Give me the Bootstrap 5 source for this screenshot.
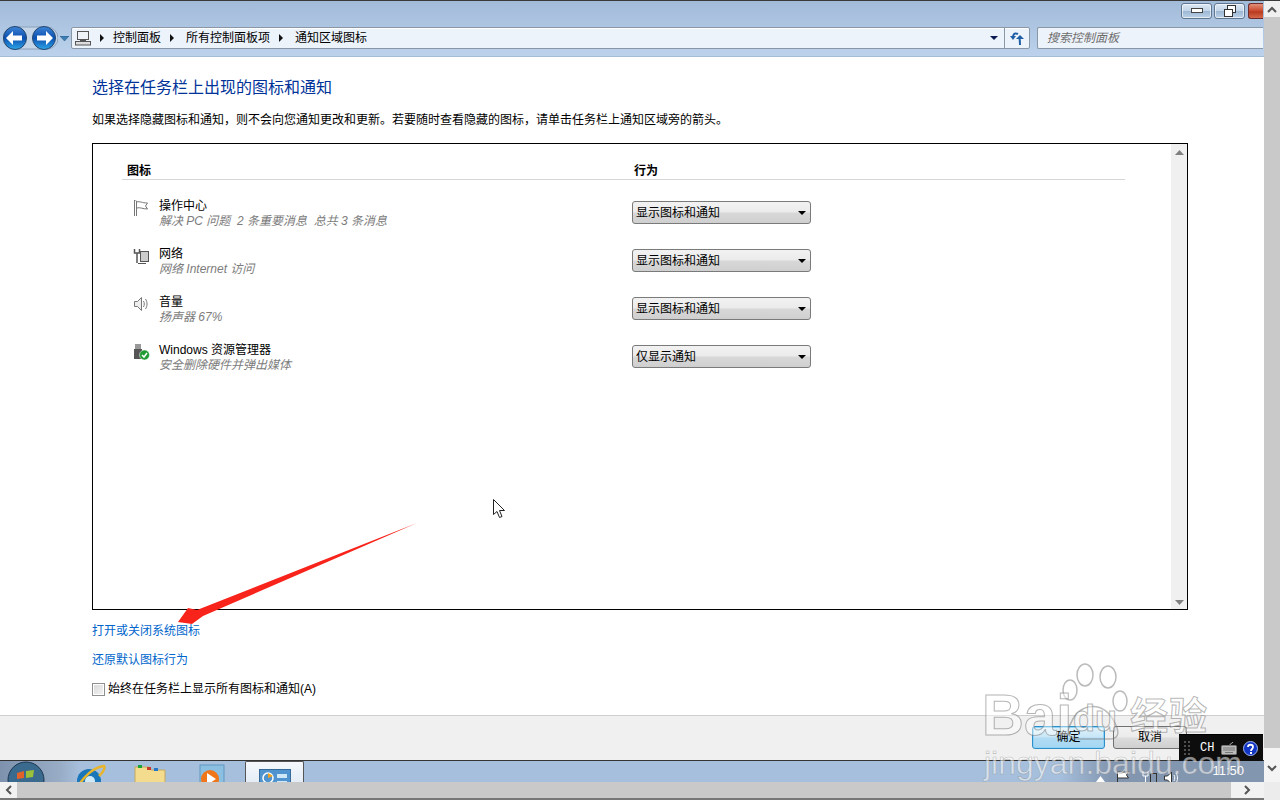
<!DOCTYPE html>
<html lang="zh-CN">
<head>
<meta charset="utf-8">
<title>通知区域图标</title>
<link href="https://cdn.jsdelivr.net/npm/bootstrap@5.3.0/dist/css/bootstrap.min.css" rel="stylesheet">
<style>
html,body{margin:0;height:800px;overflow:hidden;background:#fff}
body{font-family:"Liberation Sans","Noto Sans CJK SC",sans-serif;font-size:12px;color:#000;line-height:16px}
.screen{position:relative;width:1280px;height:800px;overflow:hidden;border-top:1px solid #3a3a3a}
.left-col{width:1264px}
.vbar{width:16px;background:#f0f0f0}
.vbtn{height:16px;font-size:0}
.vthumb{height:731px;background:#c9c9c9}
.vend{height:34px;background:#f4f4f4;padding-top:17px}
.vfoot{flex:1;background:#ececec}
.chrome{height:56px;background:linear-gradient(#a2bbd9,#bcd2ec);border-bottom:1px solid #a7bdd4;flex:none}
.winbar{height:25px;padding:2px 1px 0 0;gap:2px}
.winbtn{width:31px;height:16px;border:1px solid #5f7690;border-radius:3px;background:linear-gradient(#dce8f5 0,#c2d4e8 50%,#9db7d3 52%,#bcd2e8 100%);box-shadow:inset 0 0 0 1px rgba(255,255,255,.6)}
.winclose{width:15px;margin-left:1px;border-color:#6e2b2b;border-right:0;border-radius:3px 0 0 3px;background:linear-gradient(#e0907a,#c9482c 50%,#b83a20 55%,#d5674a);overflow:hidden;box-shadow:none}
.navrow{height:24px;padding:0 1px 0 3px}
.navdrop{width:12px}
.addr{height:22px;width:959px;margin-left:1px;background:#edf3fb;border:1px solid #8a97a6;border-radius:2px;box-shadow:inset 0 1px 0 #fff}
.crumb{color:#000;line-height:20px}
.crumb-first{margin-left:9px}
.crumb-next{margin-left:12px}
.crumbsep{width:0;height:0;margin-left:9px;border-left:4px solid #111;border-top:4px solid transparent;border-bottom:4px solid transparent}
.addr-ico{margin-left:3px;flex:none}
.addr-caret{margin-left:auto;margin-right:6px}
.addrend{width:25px;border-left:1px solid #8a97a6;height:20px}
.tri{width:0;height:0;border-top:4px solid #0b1a50;border-left:4px solid transparent;border-right:4px solid transparent}
.searchbox{width:226px;height:22px;margin-left:7px;background:#edf3fb;border:1px solid #8a97a6;border-right:0;border-radius:2px 0 0 2px;padding-left:9px;color:#6d6d6d;font-style:italic;line-height:20px}
.body-pane{flex:1;padding:21px 0 0 92px;background:#fff}
.page-head{font-size:16px;line-height:20px;color:#003399;margin:0 0 14px;font-weight:400}
.page-desc{margin:0 0 15px;line-height:16px}
.listbox{width:1096px;height:467px;border:1px solid #000;margin-bottom:13px}
.listmain{flex:1;padding:19px 46px 0 29px}
.listbar{width:16px;background:#f0f0f0;padding-top:6px}
.thead-row{width:1003px;border-bottom:1px solid #d5d5d5;height:17px;font-weight:700;line-height:16px;padding-left:5px}
.thead-a{width:507px}
.entry{height:48px;width:1003px}
.entries{padding-top:19px}
.entry-ico{width:26px;margin-left:11px;height:20px;padding-top:1px}
.entry-txt{width:473px}
.entry-name{line-height:15px}
.entry-sub{line-height:15px;color:#7c7c7c;font-style:italic;font-size:12px;white-space:pre}
.fakeselect{width:179px;height:23px;border:1px solid #7a7a7a;border-radius:3px;background:linear-gradient(#f2f2f2,#ebebeb 48%,#d8d8d8 52%,#cfcfcf);padding:1px 4px 0 3px;line-height:20px;margin-top:2px}
.blacktri{width:0;height:0;border-top:4px solid #000;border-left:4px solid transparent;border-right:4px solid transparent}
.plink{display:block;color:#0066cc;text-decoration:none;line-height:16px;margin-bottom:13px}
.chk-box{width:13px;height:13px;border:1px solid #8e8f8f;background:linear-gradient(135deg,#d8d8d8,#f4f4f4);box-shadow:inset 0 0 0 1px #fff;margin-right:3px}
.chk-row{margin-top:1px}
.foot-pane{height:45px;background:#f0f0f0;border-top:1px solid #cfcfcf;padding:10px 77px 0 0;flex:none;gap:8px}
.dlgbtn{width:74px;height:23px;border:1px solid #707070;border-radius:3px;background:linear-gradient(#f2f2f2,#ebebeb 48%,#dcdcdc 52%,#cfcfcf);text-align:center;line-height:21px;padding:0;font-size:12px}
.dlgbtn-def{width:73px;border-color:#2c8fc9;background:linear-gradient(#dff2fb,#c7e6f7 48%,#b1dcf4 52%,#a5d6f2);box-shadow:inset 0 0 0 1px #8fd4f5}
.taskbar{height:22px;flex:none;overflow:hidden;border-top:1px solid #333;background:linear-gradient(90deg,#7e92ae 0,#98acc6 60px,#a6bfdc 80px,#a6bfdc 1060px,#8396b0 1110px,#8396b0 100%);position:relative}
.task-ico{width:60px;padding-top:3px;text-align:center}
.task-orb{text-align:left;padding:0 0 0 6px}
.task-media{padding-left:5px}
.task-active{width:59px;height:30px;margin-left:5px;background:linear-gradient(#f5f8fc,#dce7f3);border:1px solid #555;border-bottom:0;border-radius:2px 2px 0 0;padding-top:7px;text-align:center}
.clock{color:#fff;font-size:13px;line-height:16px;margin:2px 20px 0 0}
.tray{margin-left:auto;padding-top:10px;margin-right:32px}
.tr-up{margin-top:5px}
.tr-flag{margin-left:11px}
.tr-net{margin-left:12px}
.tr-vol{margin-left:6px}
.hbar{height:16px;background:#c9c9c9;flex:none;width:1264px}
.hbtn{width:17px;background:#f2f2f2;font-size:0}
.hend{width:33px;margin-left:auto;background:#f2f2f2;font-size:0}
.bottomline{height:2px;background:#777;flex:none;width:1264px}
.over-layer{position:absolute;pointer-events:none}
.imebar{position:absolute;left:1179px;top:733px;width:84px;height:27px;background:#0d0d0d;border-top:1px solid #000;color:#fff;font-family:"Liberation Mono",monospace;font-size:12px;line-height:26px}
.ime-dots{margin-left:4px}
.imech{margin-left:7px;margin-right:7px;width:14px}
.ime-help{margin-left:5px}
.wm{position:absolute;color:rgba(255,255,255,.45);-webkit-text-stroke:1px rgba(120,120,120,.55);font-family:"Liberation Sans","Noto Sans CJK SC",sans-serif;white-space:nowrap;pointer-events:none}
.wm-bai{left:982px;top:684px;font-size:58px;line-height:60px;font-weight:700}
.wm-du{left:1073px;top:698px;font-size:36px;line-height:40px;font-weight:700}
.wm-jy{left:1130px;top:693px;font-size:38px;line-height:44px;font-weight:700;letter-spacing:1px}
.wm-url{left:984px;top:744px;font-size:32px;line-height:36px;color:rgba(255,255,255,.55);-webkit-text-stroke:.6px rgba(130,130,130,.5)}
</style>
</head>
<body>
<div class="screen d-flex">
  <div class="left-col d-flex flex-column">
    <div class="chrome">
      <div class="winbar d-flex justify-content-end">
        <div class="winbtn d-flex align-items-center justify-content-center"><svg width="12" height="6"><rect x=".5" y=".5" width="11" height="4" fill="#fff" stroke="#444"/></svg></div>
        <div class="winbtn d-flex align-items-center justify-content-center"><svg width="14" height="12" fill="#fff" stroke="#333"><rect x="4.5" y=".5" width="8" height="7"/><rect x="1.5" y="4.5" width="8" height="7"/></svg></div>
        <div class="winbtn winclose"></div>
      </div>
      <div class="navrow d-flex align-items-center">
        <svg width="55" height="24" viewBox="0 0 55 24">
          <defs><linearGradient id="g1" x1="0" y1="0" x2="0" y2="1"><stop offset="0" stop-color="#3f86d6"/><stop offset=".5" stop-color="#0b4fb0"/><stop offset="1" stop-color="#2fa5e8"/></linearGradient></defs>
          <rect x="0" y="1" width="55" height="22" rx="11" fill="#c5d5e8" stroke="#8aa0bb"/>
          <circle cx="12" cy="12" r="11.500" fill="url(#g1)" stroke="#24476e"/>
          <circle cx="41" cy="12" r="11.500" fill="url(#g1)" stroke="#24476e"/>
          <path d="M3 12l7-7v4.500h9v5h-9V19z" fill="#fff"/>
          <path d="M50 12l-7-7v4.500h-9v5h9V19z" fill="#fff"/>
        </svg>
        <div class="navdrop d-flex justify-content-center"><svg width="9" height="5"><path d="M0 0h9L4.500 5z" fill="#3b7fb5" stroke="#1f4f7e" stroke-width=".5"/></svg></div>
        <div class="addr d-flex align-items-center">
          <svg class="addr-ico" width="16" height="15" viewBox="0 0 16 15" fill="none" stroke="#555"><rect x="2.500" y=".5" width="11" height="8" fill="#eef3f9"/><rect x=".5" y="10.500" width="15" height="3.500" fill="#ddd"/><path d="M5 9.500h6"/></svg>
          <div class="crumbsep"></div><span class="crumb crumb-first">控制面板</span>
          <div class="crumbsep"></div><span class="crumb crumb-next">所有控制面板项</span>
          <div class="crumbsep"></div><span class="crumb crumb-next">通知区域图标</span>
          <div class="tri addr-caret"></div>
          <div class="addrend d-flex align-items-center justify-content-center">
            <svg width="15" height="15" viewBox="0 0 15 15" fill="none" stroke="#1f5fa8" stroke-width="2"><path d="M3 5c1-3 3-3 5-2"/><path d="M10 14c0-2 0-4-.500-7"/><path d="M0 5h6L3 9z" fill="#1f5fa8" stroke="none"/><path d="M6 8h8L10 4z" fill="#1f5fa8" stroke="none"/></svg>
          </div>
        </div>
        <div class="searchbox">搜索控制面板</div>
      </div>
    </div>

    <div class="body-pane">
      <h1 class="page-head">选择在任务栏上出现的图标和通知</h1>
      <p class="page-desc">如果选择隐藏图标和通知，则不会向您通知更改和更新。若要随时查看隐藏的图标，请单击任务栏上通知区域旁的箭头。</p>
      <div class="listbox d-flex">
        <div class="listmain">
          <div class="thead-row d-flex"><div class="thead-a">图标</div><div>行为</div></div>
          <div class="entries">
            <div class="entry d-flex">
              <div class="entry-ico"><svg width="17" height="17" viewBox="0 0 17 17" fill="#fff" stroke="#777"><path d="M1.500 0v16M3.500 1v15M1.500 0h2"/><path d="M3.500 2c4-1 5 1 11 1l-2 3 2 3c-5 0-7-2-11-1z"/></svg></div>
              <div class="entry-txt"><div class="entry-name">操作中心</div><div class="entry-sub">解决 PC 问题  2 条重要消息  总共 3 条消息</div></div>
              <div class="fakeselect d-flex align-items-center justify-content-between"><span>显示图标和通知</span><div class="blacktri"></div></div>
            </div>
            <div class="entry d-flex">
              <div class="entry-ico"><svg width="17" height="17" viewBox="0 0 17 17" fill="none" stroke="#555"><path d="M1.500 1v4h5V1M4 5v10" stroke-width="1.500"/><rect x="7.500" y="3.500" width="8" height="10" fill="#ccc"/><path d="M5 15.500h8"/></svg></div>
              <div class="entry-txt"><div class="entry-name">网络</div><div class="entry-sub">网络 Internet 访问</div></div>
              <div class="fakeselect d-flex align-items-center justify-content-between"><span>显示图标和通知</span><div class="blacktri"></div></div>
            </div>
            <div class="entry d-flex">
              <div class="entry-ico"><svg width="17" height="17" viewBox="0 0 17 17" fill="#eee" stroke="#777"><path d="M1.500 5.500h3l4-4v13l-4-4h-3z"/><path d="M10.500 5c1 2 1 4 0 6M12.500 3c2 3 2 7 0 10" fill="none"/></svg></div>
              <div class="entry-txt"><div class="entry-name">音量</div><div class="entry-sub">扬声器 67%</div></div>
              <div class="fakeselect d-flex align-items-center justify-content-between"><span>显示图标和通知</span><div class="blacktri"></div></div>
            </div>
            <div class="entry d-flex">
              <div class="entry-ico"><svg width="17" height="17" viewBox="0 0 17 17"><rect x="2" y="0" width="6" height="5" fill="#999"/><rect x="1" y="5" width="8" height="10" fill="#555"/><circle cx="11.500" cy="11" r="5" fill="#1f9b32" stroke="#fff" stroke-width=".5"/><path d="M9 11l2 2 3-4" fill="none" stroke="#fff" stroke-width="1.500"/></svg></div>
              <div class="entry-txt"><div class="entry-name">Windows 资源管理器</div><div class="entry-sub">安全删除硬件并弹出媒体</div></div>
              <div class="fakeselect d-flex align-items-center justify-content-between"><span>仅显示通知</span><div class="blacktri"></div></div>
            </div>
          </div>
        </div>
        <div class="listbar d-flex flex-column justify-content-between align-items-center pb-1">
          <svg width="9" height="5"><path d="M0 5h9L4.500 0z" fill="#808080"/></svg>
          <svg width="9" height="5"><path d="M0 0h9L4.500 5z" fill="#808080"/></svg>
        </div>
      </div>
      <a class="plink" href="#">打开或关闭系统图标</a>
      <a class="plink" href="#">还原默认图标行为</a>
      <div class="chk-row d-flex align-items-center"><div class="chk-box"></div><span>始终在任务栏上显示所有图标和通知(A)</span></div>
    </div>

    <div class="foot-pane d-flex justify-content-end align-items-start">
      <button class="dlgbtn dlgbtn-def" type="button">确定</button>
      <button class="dlgbtn" type="button">取消</button>
    </div>

    <div class="taskbar d-flex">
      <div class="task-ico task-orb"><svg width="40" height="30" viewBox="0 0 40 30"><circle cx="20" cy="19" r="18" fill="#3b6a8f" stroke="#1d3550"/><path d="M11 12l7-2v7l-7 1z" fill="#e2622a"/><path d="M20 10l8-1-1 7-7 1z" fill="#9cc03a"/></svg></div>
      <div class="task-ico"><svg width="32" height="26" viewBox="0 0 32 26"><circle cx="15" cy="17" r="12" fill="#1976b8"/><circle cx="16" cy="17" r="5" fill="#cfe9f7"/><path d="M3 24C10 12 20 3 30 2c2 3-3 8-5 10" fill="none" stroke="#e8b52a" stroke-width="2.500"/></svg></div>
      <div class="task-ico"><svg width="32" height="22" viewBox="0 0 32 22"><path d="M1 3h14l2 3h14v16H1z" fill="#f3dc8e" stroke="#c4a860"/><rect x="4" y="1" width="4" height="3" fill="#15a33a"/><rect x="13" y="3" width="4" height="3" fill="#c7392a"/><rect x="20" y="4" width="4" height="3" fill="#2277cc"/></svg></div>
      <div class="task-ico task-media"><svg width="28" height="22" viewBox="0 0 28 22"><rect x="1" y="1" width="24" height="21" fill="#8cc0e2" stroke="#5f97bf"/><circle cx="11" cy="15" r="9" fill="#f0761a"/><path d="M8 9l9 6-9 6z" fill="#fff"/></svg></div>
      <div class="task-active"><svg width="32" height="22" viewBox="0 0 32 22"><rect x=".5" y=".5" width="31" height="22" fill="#4f94cf" stroke="#35699a"/><circle cx="9" cy="9" r="5" fill="none" stroke="#fff" stroke-width="1.500"/><path d="M9 4l5 3-5 2z" fill="#f2a21c"/><rect x="18" y="5" width="10" height="4" fill="#cfe8f7"/><rect x="18" y="12" width="10" height="4" fill="#cfe8f7"/></svg></div>
      <div class="tray d-flex align-items-start">
        <svg class="tr-up" width="9" height="6"><path d="M0 6h9L4.500 0z" fill="#fff"/></svg>
        <svg class="tr-flag" width="14" height="14" fill="#fff" stroke="#333"><path d="M1.500 0v14M1.500 1h11l-2 3 2 3h-11"/></svg>
        <svg class="tr-net" width="16" height="14" fill="none" stroke="#fff"><path d="M1 0v5h5V0M3.500 5v9"/><rect x="8.500" y="2.500" width="6" height="9" stroke="#333"/></svg>
        <svg class="tr-vol" width="16" height="14" fill="#fff" stroke="#333"><path d="M.5 5h3l4-4v12l-4-4h-3z"/><path d="M10 4c1 2 1 4 0 6M12 2c2 3 2 7 0 10" fill="none" stroke="#fff"/></svg>
      </div>
      <div class="clock">11:50</div>
    </div>

    <div class="hbar d-flex">
      <div class="hbtn d-flex align-items-center justify-content-center"><svg width="7" height="10" fill="none" stroke="#555" stroke-width="2"><path d="M6 1L2 5l4 4"/></svg></div>
      <div class="hend d-flex align-items-center justify-content-center"><svg width="7" height="10" fill="none" stroke="#555" stroke-width="2"><path d="M1 1l4 4-4 4"/></svg></div>
    </div>
    <div class="bottomline"></div>
  </div>

  <div class="vbar d-flex flex-column">
    <div class="vbtn d-flex align-items-center justify-content-center"><svg width="10" height="7" fill="none" stroke="#555" stroke-width="2"><path d="M1 6l4-4 4 4"/></svg></div>
    <div class="vthumb"></div>
    <div class="vend d-flex justify-content-center"><svg width="10" height="7" fill="none" stroke="#555" stroke-width="2"><path d="M1 1l4 4 4-4"/></svg></div>
    <div class="vfoot"></div>
  </div>

  <div class="imebar d-flex align-items-center">
    <svg class="ime-dots" width="10" height="16" fill="#666"><circle cx="2" cy="2" r="1"/><circle cx="6" cy="2" r="1"/><circle cx="2" cy="6" r="1"/><circle cx="6" cy="6" r="1"/><circle cx="2" cy="10" r="1"/><circle cx="6" cy="10" r="1"/><circle cx="2" cy="14" r="1"/><circle cx="6" cy="14" r="1"/></svg>
    <span class="imech">CH</span>
    <svg width="17" height="15" viewBox="0 0 17 15"><path d="M9 4c0-2 2-1 3-3" fill="none" stroke="#aaa"/><rect x=".5" y="4.500" width="15" height="9" rx="1" fill="#bbb" stroke="#777"/><path d="M2 7h12M2 9h12M4 11.500h8" stroke="#777"/></svg>
    <svg class="ime-help" width="15" height="15" viewBox="0 0 15 15"><circle cx="7.500" cy="7.500" r="7" fill="#1236c4" stroke="#9fb4ef"/><path d="M5 6c0-3 5-3 5 0 0 2-2 2-2 4" fill="none" stroke="#fff" stroke-width="1.800"/><rect x="7" y="11" width="2" height="2" fill="#fff"/></svg>
  </div>

  <svg class="over-layer" style="left:985px;top:660px" width="230" height="90" viewBox="0 0 230 90" fill="rgba(255,255,255,.4)" stroke="rgba(120,120,120,.5)" stroke-width="1.500">
    <ellipse cx="100" cy="14" rx="8" ry="11"/><ellipse cx="123" cy="16" rx="8" ry="11"/><ellipse cx="85" cy="29" rx="7" ry="10"/><ellipse cx="135" cy="40" rx="7" ry="10"/>
    <path d="M86 62c8-20 32-24 44 0 6 12 2 16-6 16H94c-10 0-14-6-8-16z" fill="none"/>
  </svg>
  <div class="wm wm-bai">Bai</div>
  <div class="wm wm-du">du</div>
  <div class="wm wm-jy">经验</div>
  <div class="wm wm-url">jingyan.baidu.com</div>

  <svg class="over-layer" style="left:0;top:0" width="1280" height="800" viewBox="0 1 1280 800">
    <polygon points="417,523 197,610 188,608 178,622 192,624 203,616" fill="#f8231a"/>
    <path d="M493.500 499.500v15l3.500-3 2.500 6 2.500-1-2.500-6h5z" fill="#fff" stroke="#222"/>
  </svg>
</div>
</body>
</html>
